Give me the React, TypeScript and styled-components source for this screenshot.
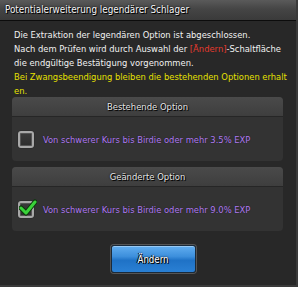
import React from "react";
import styled, { createGlobalStyle } from "styled-components";

const Global = createGlobalStyle`
  html, body { margin: 0; padding: 0; background: #1e1e1e; }
  * { box-sizing: border-box; }
`;

const FONT = `"DejaVu Sans Condensed", "DejaVu Sans", sans-serif`;

const Window = styled.div`
  width: 298px;
  height: 287px;
  background: #282828;
  border-right: 2px solid #3a3a3a;
  border-bottom: 2px solid #3a3a3a;
  font-family: ${FONT};
  display: flex;
  flex-direction: column;
  overflow: hidden;
`;

const TitleBar = styled.div`
  height: 21px;
  flex: none;
  background: linear-gradient(#5a5a5a, #454545 45%, #3a3a3a);
  border-bottom: 1px solid #0c0c0c;
  color: #f4f4f4;
  font-size: 9.8px;
  line-height: 20px;
  padding-left: 5px;
  text-shadow: 0 0 2px #000, 1px 1px 0 #000;
`;

const Message = styled.div`
  margin: 7px 0 0 14px;
  font-size: 9.3px;
  line-height: 14px;
  white-space: nowrap;
`;

const Line = styled.div<{ $tone?: "warn" }>`
  color: ${(p) => (p.$tone === "warn" ? "#e6e000" : "#f2f2f2")};
`;

const Red = styled.span`
  color: #e53a2e;
`;

const Panel = styled.div<{ $top: number }>`
  margin: ${(p) => p.$top}px 13px 0 12px;
  border-radius: 4px;
  background: #333333;
  overflow: hidden;
`;

const PanelHeader = styled.div`
  height: 20px;
  background: linear-gradient(#4a4a4a, #3e3e3e);
  border-bottom: 1px solid #262626;
  color: #e6e6e6;
  font-size: 9.4px;
  line-height: 19px;
  text-align: center;
  text-shadow: 0 0 2px #000, 1px 1px 0 #000;
`;

const PanelBody = styled.div`
  height: 44px;
  display: flex;
  align-items: center;
  padding-left: 6px;
  gap: 9px;
`;

const Box = styled.div`
  position: relative;
  width: 16px;
  height: 17px;
  border-radius: 3px;
  border: 2px solid #a8a8a8;
  background: linear-gradient(#3a3a3a, #2e2e2e);
  box-shadow: inset 0 0 0 1px #555, 0 0 1px #000;
  flex: none;
`;

const Tick = styled.svg`
  position: absolute;
  left: -1px;
  top: -4px;
  width: 18px;
  height: 18px;
`;

const OptionText = styled.span`
  color: #b07ef0;
  font-size: 9.3px;
  white-space: nowrap;
  text-shadow: 0 0 1px #1a1020;
`;

const Footer = styled.div`
  display: flex;
  justify-content: center;
  margin-top: 14px;
  padding-left: 10px;
`;

const Button = styled.button`
  width: 85px;
  height: 28px;
  border-radius: 3px;
  border: 1px solid #1a2a3a;
  background: linear-gradient(#62aef0, #3d8fdc 40%, #1f72c6 55%, #2a80d4);
  box-shadow: inset 0 1px 0 rgba(255,255,255,0.35), 0 0 0 1px #555;
  color: #fff;
  font-family: ${FONT};
  font-size: 9.6px;
  text-shadow: 0 0 2px #000, 1px 1px 0 #000, -1px 0 0 #000;
  padding: 0;
`;

function Checkbox({ checked }: { checked?: boolean }) {
  return (
    <Box>
      {checked && (
        <Tick viewBox="0 0 18 18">
          <path d="M2 9 L7 14 L16 3" fill="none" stroke="#0a3a0a" strokeWidth="5" strokeLinecap="round" strokeLinejoin="round" />
          <path d="M2 9 L7 14 L16 3" fill="none" stroke="#3ad23a" strokeWidth="3" strokeLinecap="round" strokeLinejoin="round" />
        </Tick>
      )}
    </Box>
  );
}

export default function App() {
  return (
    <>
      <Global />
      <Window>
        <TitleBar>Potentialerweiterung legendärer Schlager</TitleBar>
        <Message>
          <Line>Die Extraktion der legendären Option ist abgeschlossen.</Line>
          <Line>
            Nach dem Prüfen wird durch Auswahl der <Red>[Ändern]</Red>-Schaltfläche
          </Line>
          <Line>die endgültige Bestätigung vorgenommen.</Line>
          <Line $tone="warn">Bei Zwangsbeendigung bleiben die bestehenden Optionen erhalt</Line>
          <Line $tone="warn">en.</Line>
        </Message>
        <Panel $top={-1}>
          <PanelHeader>Bestehende Option</PanelHeader>
          <PanelBody>
            <Checkbox />
            <OptionText>Von schwerer Kurs bis Birdie oder mehr 3.5% EXP</OptionText>
          </PanelBody>
        </Panel>
        <Panel $top={6}>
          <PanelHeader>Geänderte Option</PanelHeader>
          <PanelBody>
            <Checkbox checked />
            <OptionText>Von schwerer Kurs bis Birdie oder mehr 9.0% EXP</OptionText>
          </PanelBody>
        </Panel>
        <Footer>
          <Button>Ändern</Button>
        </Footer>
      </Window>
    </>
  );
}
